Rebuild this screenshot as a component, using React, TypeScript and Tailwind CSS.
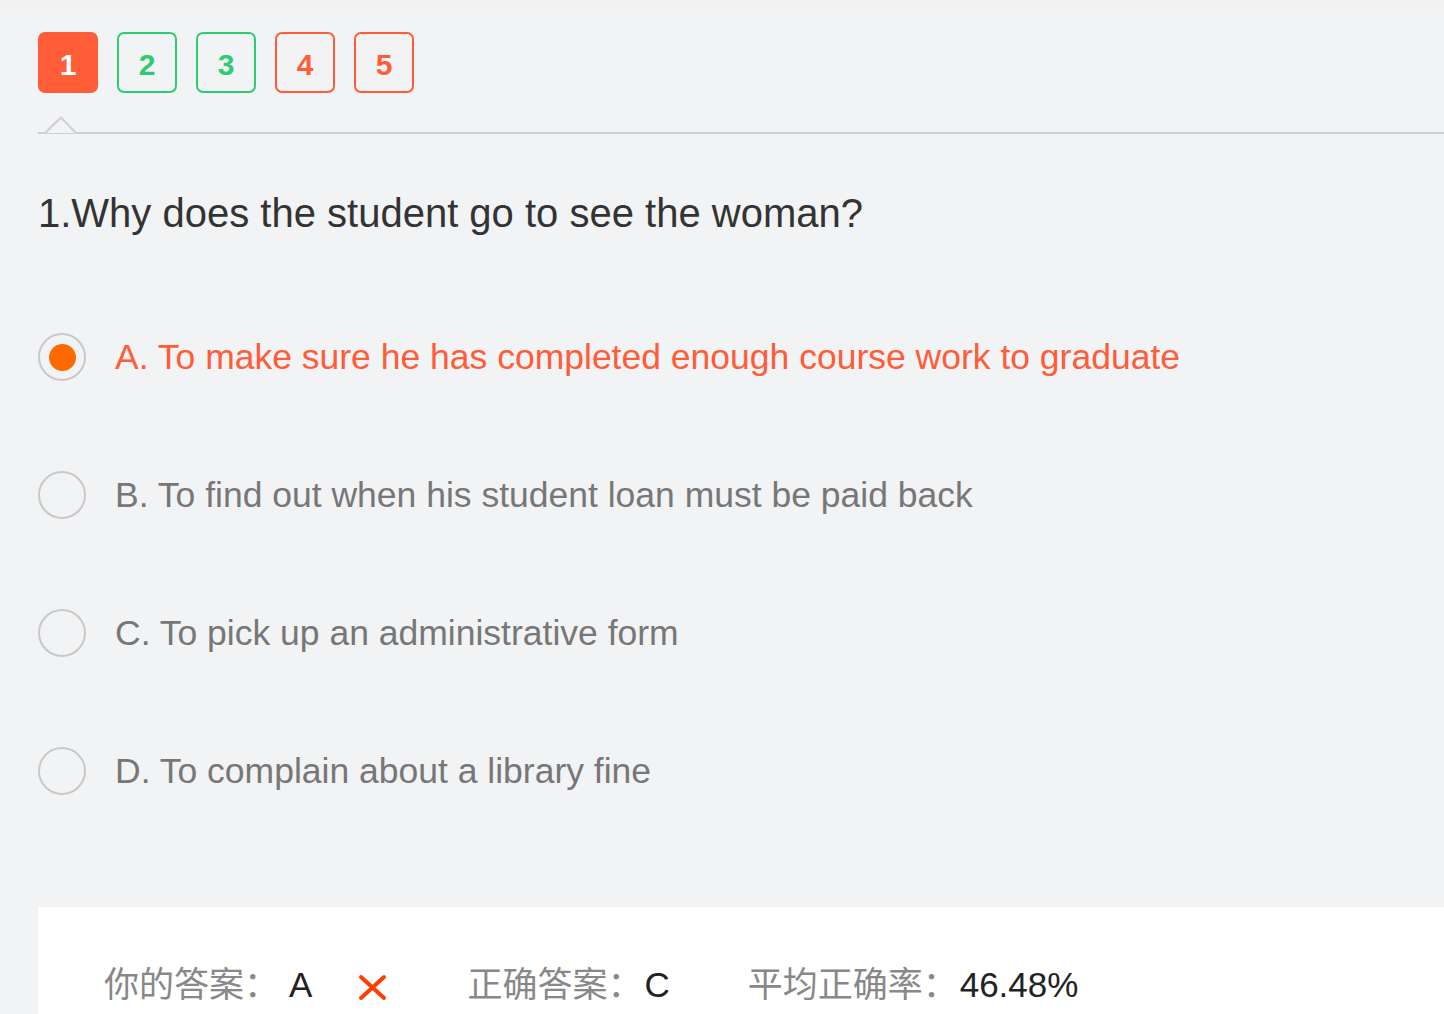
const font = "font-['Helvetica','Liberation_Sans','Noto_Sans_CJK_SC',sans-serif]";

type Option = { key: string; text: string };

const options: Option[] = [
  { key: "A", text: "To make sure he has completed enough course work to graduate" },
  { key: "B", text: "To find out when his student loan must be paid back" },
  { key: "C", text: "To pick up an administrative form" },
  { key: "D", text: "To complain about a library fine" },
];

const tabs = [
  { n: 1, style: "bg-[#ff5c38] border-[#ff5c38] text-white" },
  { n: 2, style: "border-[#2ecc71] text-[#2ecc71]" },
  { n: 3, style: "border-[#2ecc71] text-[#2ecc71]" },
  { n: 4, style: "border-[#ff5c38] text-[#ff5c38]" },
  { n: 5, style: "border-[#ff5c38] text-[#ff5c38]" },
];

export default function App() {
  const selected = "A";
  return (
    <div className={`w-[1444px] h-[1014px] overflow-hidden bg-[#f2f3f5] ${font}`}>
      <div className="h-[9px] bg-[#f2f2f2] overflow-hidden" />

      <div className="pl-[38px]">
        <div className="flex gap-[19px] pt-[23px]">
          {tabs.map((t) => (
            <button
              key={t.n}
              className={`w-[60px] h-[61px] rounded-[7px] border-2 flex items-center justify-center pt-[3px] text-[30px] font-bold ${t.style}`}
            >
              {t.n}
            </button>
          ))}
        </div>

        <div className="relative mt-[39px] h-[2px] bg-[#cfcfd1]">
          <svg
            className="absolute left-[7px] -top-[16px]"
            width="32"
            height="18"
            viewBox="0 0 32 18"
          >
            <path d="M0 17 L16 1.5 L31 17" fill="#f2f3f5" stroke="#cfcfd1" strokeWidth="2" />
          </svg>
        </div>

        <h2 className="mt-[57px] text-[40px] leading-[44px] text-[#333]">
          1.Why does the student go to see the woman?
        </h2>

        <ul className="mt-[98px] flex flex-col gap-[90px]">
          {options.map((o) => {
            const active = o.key === selected;
            return (
              <li key={o.key} className="flex items-center h-[48px]">
                <span className="w-[48px] h-[48px] rounded-full border-2 border-[#c8c8c8] flex items-center justify-center shrink-0">
                  {active && <span className="w-[27px] h-[27px] rounded-full bg-[#ff6a00]" />}
                </span>
                <span
                  className={`ml-[29px] pt-[2px] text-[35.5px] ${active ? "text-[#ff5c38]" : "text-[#777]"}`}
                >
                  {o.key}. {o.text}
                </span>
              </li>
            );
          })}
        </ul>

        <div className="mt-[112px] bg-white h-[120px] pl-[66px] pt-[58px] flex items-start text-[35px] leading-[40px]">
          <span className="text-[#888]">你的答案：</span>
          <span className="ml-[10px] text-[#222]">A</span>
          <svg className="ml-[46px] mt-[9px]" width="29" height="27" viewBox="0 0 29 27">
            <path d="M3 3 L26 24 M26 3 L3 24" stroke="#ff3d00" strokeWidth="4" strokeLinecap="round" />
          </svg>
          <span className="ml-[80px] text-[#888]">正确答案：</span>
          <span className="ml-[2px] text-[#222]">C</span>
          <span className="ml-[78px] text-[#888]">平均正确率：</span>
          <span className="ml-[2px] text-[#222]">46.48%</span>
        </div>
      </div>
    </div>
  );
}
